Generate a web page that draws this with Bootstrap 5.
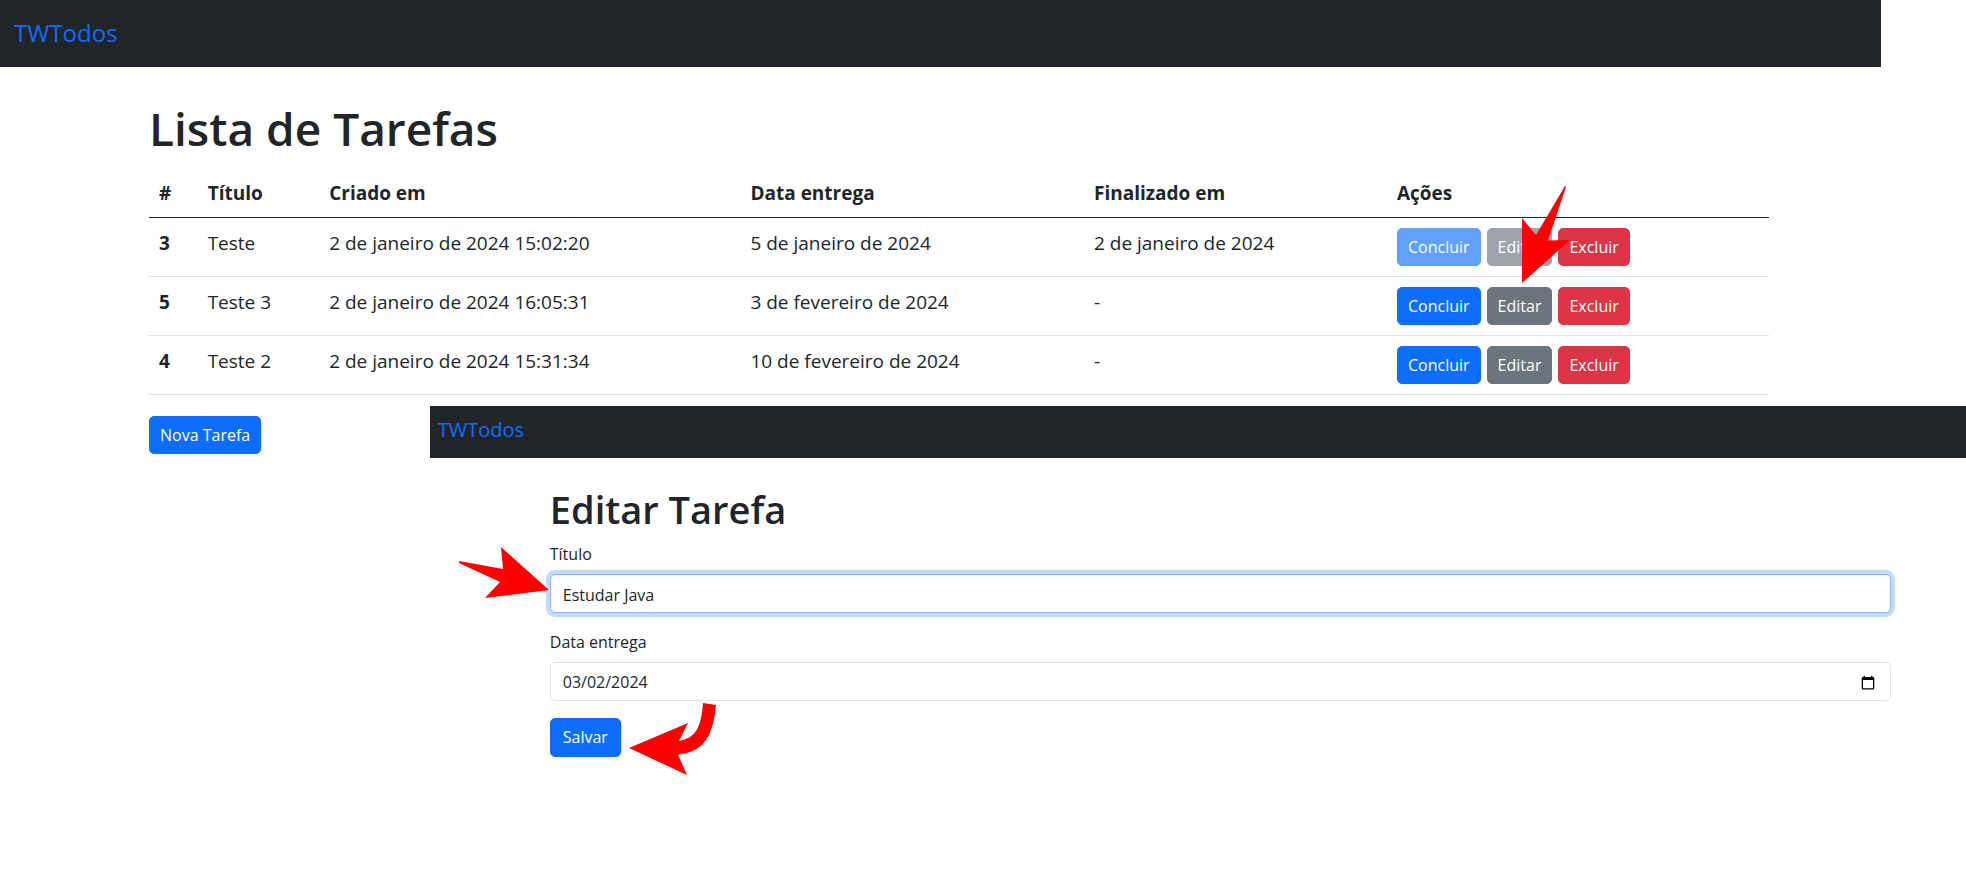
<!DOCTYPE html>
<html lang="pt-BR">
<head>
<meta charset="utf-8">
<meta name="viewport" content="width=device-width, initial-scale=1">
<title>TWTodos</title>
<link href="https://cdn.jsdelivr.net/npm/bootstrap@5.3.0/dist/css/bootstrap.min.css" rel="stylesheet">
<style>
  body { font-family: "Open Sans", "Noto Sans", sans-serif; background: #fff; color: #212529; }
  .bar { background: #212529; }
  .bar a { color: #0d6efd; text-decoration: none; }
  .list-bar { width: 95.7%; height: 67px; padding: 0 14px 2px; }
  .list-bar a { font-size: 24px; }
  .list-body { margin-left: 7.58%; margin-right: 10%; padding-top: 29px; }
  .list-body h1 { font-size: 46px; line-height: 64px; font-weight: 600; margin: 0 0 7px; }
  .tasks { table-layout: fixed; border-collapse: separate; border-spacing: 0; font-size: 19px; line-height: 30px; margin: 0; }
  .tasks > :not(caption) > * > * { padding: 10px; }
  .tasks thead th { border-bottom-color: #212529; padding: 11px 10px 9px; }
  .tasks tbody td, .tasks tbody th { border-color: #dee2e6; }
  .c-id { width: 3%; } .c-title { width: 7.5%; } .c-made { width: 26%; }
  .c-due { width: 21.2%; } .c-done { width: 18.7%; }
  .btn-task { font-size: 16px; line-height: 26px; padding: 5px 10px; border-radius: 5px; }
  .acts { gap: 6px; }
  .below-list { width: 21.86%; padding: 21px 0 0 7.58%; }
  .editor { margin-top: 11px; }
  .edit-bar { height: 52px; padding: 0 8px 4px; }
  .edit-bar a { font-size: 20px; }
  .edit-form { margin: 0 75px 0 120px; padding-top: 25px; }
  .edit-form h1 { font-size: 38px; line-height: 52px; font-weight: 600; margin: 0 0 7px; }
  .edit-form label, .edit-form .form-control, .edit-form .btn { font-size: 16px; line-height: 25px; }
  .edit-form label { display: block; margin-bottom: 7px; }
  .edit-form .form-control { height: 39px; padding: 7px 12px 5px; border-radius: 5px; border-color: #dee2e6; color: #212529; }
  .edit-form .titled { border-color: #86b7fe; box-shadow: 0 0 0 4px #c2dbfe; }
  .field { margin-bottom: 17px; }
  .edit-form .btn { padding: 6px 12px; border-radius: 5px; }
  .pointer { position: absolute; fill: #f00; pointer-events: none; z-index: 2; }
  .pointer-edit { left: 125px; top: -42px; }
  .pointer-title { left: -92px; top: -27px; }
  .pointer-save { left: 79px; top: -16px; }
</style>
</head>
<body class="min-vh-100">
<nav class="bar list-bar d-flex align-items-center"><a href="#">TWTodos</a></nav>
<main class="pb-5">
  <section class="list-body">
    <h1>Lista de Tarefas</h1>
    <table class="table tasks">
      <colgroup><col class="c-id"><col class="c-title"><col class="c-made"><col class="c-due"><col class="c-done"><col></colgroup>
      <thead>
        <tr><th>#</th><th>Título</th><th>Criado em</th><th>Data entrega</th><th>Finalizado em</th><th>Ações</th></tr>
      </thead>
      <tbody>
        <tr>
          <th>3</th><td>Teste</td><td>2 de janeiro de 2024 15:02:20</td><td>5 de janeiro de 2024</td><td>2 de janeiro de 2024</td>
          <td><div class="acts d-flex position-relative">
            <button class="btn btn-primary btn-task" disabled>Concluir</button>
            <button class="btn btn-secondary btn-task" disabled>Editar</button>
            <button class="btn btn-danger btn-task">Excluir</button>
            <svg class="pointer pointer-edit" width="48" height="98" viewBox="0 0 48 98" aria-hidden="true"><path d="M43 0L44 1L26 54.500L48 54L0 97V32L14 49Z"/></svg>
          </div></td>
        </tr>
        <tr>
          <th>5</th><td>Teste 3</td><td>2 de janeiro de 2024 16:05:31</td><td>3 de fevereiro de 2024</td><td>-</td>
          <td><div class="acts d-flex">
            <button class="btn btn-primary btn-task">Concluir</button>
            <button class="btn btn-secondary btn-task">Editar</button>
            <button class="btn btn-danger btn-task">Excluir</button>
          </div></td>
        </tr>
        <tr>
          <th>4</th><td>Teste 2</td><td>2 de janeiro de 2024 15:31:34</td><td>10 de fevereiro de 2024</td><td>-</td>
          <td><div class="acts d-flex">
            <button class="btn btn-primary btn-task">Concluir</button>
            <button class="btn btn-secondary btn-task">Editar</button>
            <button class="btn btn-danger btn-task">Excluir</button>
          </div></td>
        </tr>
      </tbody>
    </table>
  </section>
  <div class="d-flex align-items-start">
    <div class="below-list flex-shrink-0"><button class="btn btn-primary btn-task text-nowrap">Nova Tarefa</button></div>
    <section class="editor flex-grow-1">
      <nav class="bar edit-bar d-flex align-items-center"><a href="#">TWTodos</a></nav>
      <form class="edit-form">
        <h1>Editar Tarefa</h1>
        <div class="field">
          <label for="titulo">Título</label>
          <div class="position-relative">
            <input class="form-control titled" type="text" id="titulo" value="Estudar Java">
            <svg class="pointer pointer-title" width="92" height="54" viewBox="0 0 92 54" aria-hidden="true"><path d="M1 14L45 22L43 0L91 43L27 51L42 35L1 16Z"/></svg>
          </div>
        </div>
        <div class="field">
          <label for="entrega">Data entrega</label>
          <input class="form-control" type="date" id="entrega" value="2024-03-02">
        </div>
        <div class="position-relative">
          <button class="btn btn-primary" type="button">Salvar</button>
          <svg class="pointer pointer-save" width="90" height="76" viewBox="0 0 90 76" aria-hidden="true"><path d="M0 46L59 21L50 39C66 36 72 27 74 1L87 3C84 34 75 50 49 52.500L58 73Z"/></svg>
        </div>
      </form>
    </section>
  </div>
</main>
<script src="https://cdn.jsdelivr.net/npm/bootstrap@5.3.0/dist/js/bootstrap.bundle.min.js"></script>
</body>
</html>
